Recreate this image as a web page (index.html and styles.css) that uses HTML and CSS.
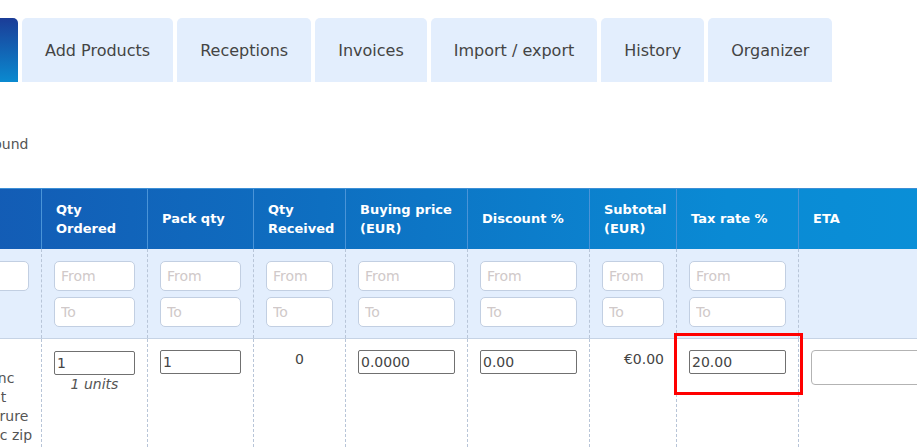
FILE: index.html
```html
<!DOCTYPE html>
<html lang="en">
<head>
    <meta charset="UTF-8">
    <meta name="viewport" content="width=device-width, initial-scale=1.0">
    <title>Supplier order</title>
    <link rel="stylesheet" href="styles.css">
</head>
<body>
    <div class="viewport">
        <div class="page">
            <nav class="tabs">
                <a class="tab active" href="#">Order details</a>
                <a class="tab" href="#">Add Products</a>
                <a class="tab" href="#">Receptions</a>
                <a class="tab" href="#">Invoices</a>
                <a class="tab" href="#">Import / export</a>
                <a class="tab" href="#">History</a>
                <a class="tab" href="#">Organizer</a>
            </nav>

            <p class="results">Search results: 1 product found</p>

            <table class="lines">
                <colgroup>
                    <col style="width: 241px">
                    <col style="width: 106px">
                    <col style="width: 106px">
                    <col style="width: 92px">
                    <col style="width: 122px">
                    <col style="width: 122px">
                    <col style="width: 87px">
                    <col style="width: 122px">
                    <col style="width: 160px">
                </colgroup>
                <thead>
                    <tr>
                        <th>Product name</th>
                        <th>Qty<br>Ordered</th>
                        <th>Pack qty</th>
                        <th>Qty<br>Received</th>
                        <th>Buying price<br>(EUR)</th>
                        <th>Discount %</th>
                        <th>Subtotal<br>(EUR)</th>
                        <th>Tax rate %</th>
                        <th>ETA</th>
                    </tr>
                </thead>
                <tbody>
                    <tr class="filters">
                        <td><input type="text" class="filter" placeholder="Search"></td>
                        <td><input type="text" class="filter" placeholder="From"><input type="text" class="filter" placeholder="To"></td>
                        <td><input type="text" class="filter" placeholder="From"><input type="text" class="filter" placeholder="To"></td>
                        <td><input type="text" class="filter" placeholder="From"><input type="text" class="filter" placeholder="To"></td>
                        <td><input type="text" class="filter" placeholder="From"><input type="text" class="filter" placeholder="To"></td>
                        <td><input type="text" class="filter" placeholder="From"><input type="text" class="filter" placeholder="To"></td>
                        <td><input type="text" class="filter" placeholder="From"><input type="text" class="filter" placeholder="To"></td>
                        <td><input type="text" class="filter" placeholder="From"><input type="text" class="filter" placeholder="To"></td>
                        <td></td>
                    </tr>
                    <tr class="line">
                        <td class="name">
                            <div>Parure bijoux</div>
                            <div>collier et bracelets acier zinc</div>
                            <div>finition rose dorée &amp; argent</div>
                            <div>ensemble assortis avec parure</div>
                            <div>pochettes et fermeture zinc zip</div>
                        </td>
                        <td class="center">
                            <input type="text" class="field" value="1">
                            <div class="units">1 units</div>
                        </td>
                        <td><input type="text" class="field" value="1"></td>
                        <td class="center">0</td>
                        <td><input type="text" class="field" value="0.0000"></td>
                        <td><input type="text" class="field" value="0.00"></td>
                        <td class="right">€0.00</td>
                        <td class="highlighted">
                            <input type="text" class="field" value="20.00">
                            <span class="marker"></span>
                        </td>
                        <td><input type="text" class="date-field"></td>
                    </tr>
                </tbody>
            </table>
        </div>
    </div>
</body>
</html>
```

FILE: styles.css
```css
* { margin: 0; padding: 0; box-sizing: border-box; }
body { font-family: "DejaVu Sans", Arial, sans-serif; color: #444; background: #fff; }
.viewport { width: 917px; height: 447px; overflow: hidden; }
.page { margin-left: -200px; width: 1400px; }

.tabs { display: flex; gap: 4px; margin-top: 18px; }
.tab { height: 64px; display: flex; align-items: center; padding: 0 23px; background: #e3eefd; color: #444; font-size: 16px; text-decoration: none; border-radius: 5px 5px 0 0; }
.tab.active { width: 218px; justify-content: center; background: linear-gradient(180deg, #1b3c97 0%, #0a8ad0 100%); color: #fff; }

.results { margin: 54px 0 36px; padding-left: 8px; font-size: 14px; color: #555; }

.lines { border-collapse: collapse; table-layout: fixed; width: 1158px; background: linear-gradient(90deg, #1651ae 0%, #0e6fc1 45%, #0a8ad4 80%, #0a90d8 100%) top / 100% 61px no-repeat; }
.lines th { height: 60px; padding: 0 14px; text-align: left; color: #fff; font-size: 13px; font-weight: bold; line-height: 19px; border-top: 1px solid #3c8fd6; border-left: 1px solid #4a94d8; }
.lines td { border-left: 1px dashed #b8c5d8; padding: 12px; vertical-align: top; font-size: 14px; color: #444; }

.filters td { background: #e3eefd; border-bottom: 1px solid #c6d3e5; padding: 12px 12px 11px; }
.filter { display: block; width: 100%; height: 30px; margin-bottom: 6px; padding: 0 6px; border: 1px solid #c2cfe2; border-radius: 5px; background: #fff; font: 14px "DejaVu Sans", sans-serif; }
.filter:last-child { margin-bottom: 0; }
.filter::placeholder { color: #d0c9c9; }

.line td { padding-top: 11px; height: 108px; }
.line .name { line-height: 19px; color: #555; }
.line .name div { white-space: nowrap; }
.center { text-align: center; }
.right { text-align: right; }
.line td.center, .line td.right { padding-top: 12px; }
.field { display: block; width: 100%; height: 24px; padding: 0 2px; border: 1px solid #707070; border-radius: 2px; font: 14px "DejaVu Sans", sans-serif; color: #444; }
.units { margin-top: 1px; font-style: italic; font-size: 14px; color: #555; }
.date-field { display: block; width: 100%; height: 35px; border: 1px solid #b3b3b3; border-radius: 4px; }

.highlighted { position: relative; }
.marker { position: absolute; left: -3px; top: -6px; width: 129px; height: 62px; border: 3px solid #ff0000; }
```
